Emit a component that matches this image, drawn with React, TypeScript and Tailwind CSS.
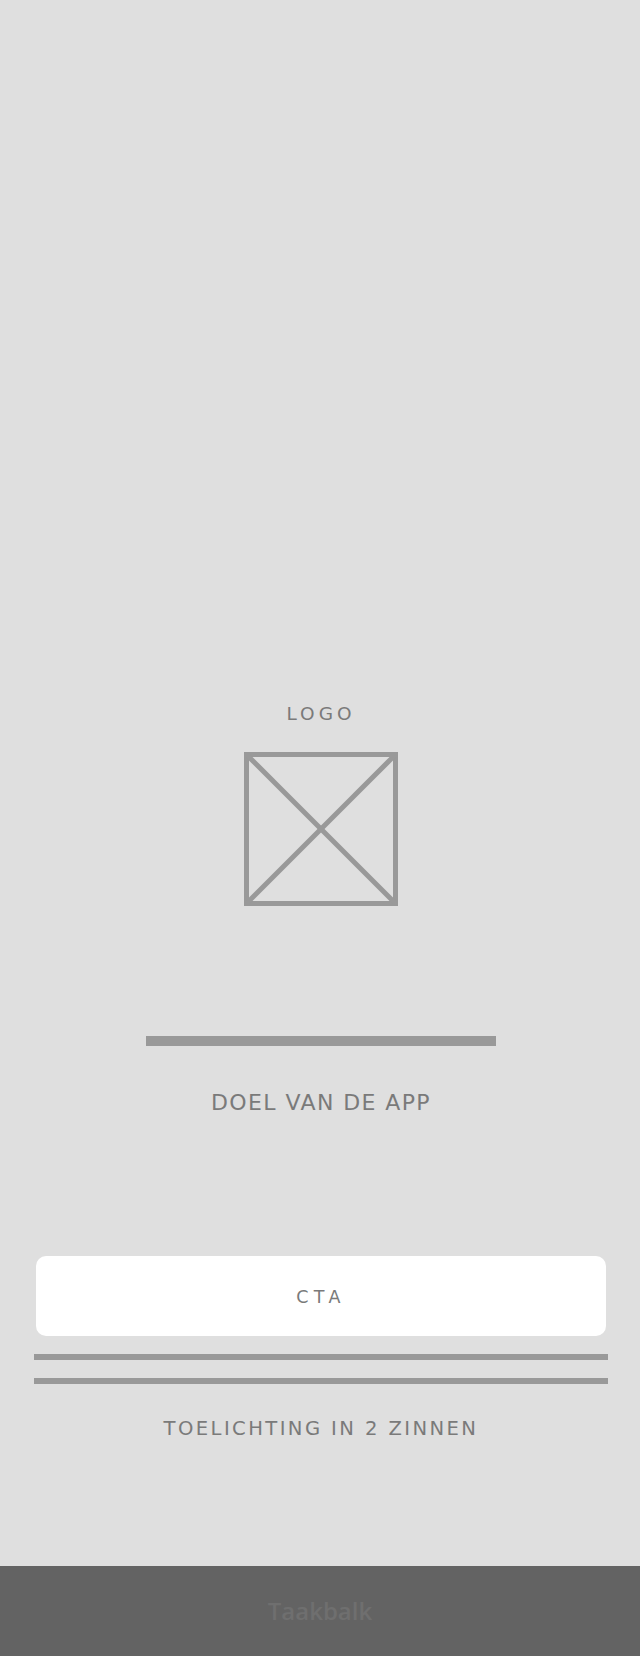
import React from "react";

export default function App() {
  const txt = "font-['DejaVu_Sans',sans-serif] font-normal text-[#7a7a7a] leading-none";
  return (
    <div className="min-h-[1656px] flex flex-col bg-[#dfdfdf]">
      <main className="flex-1 flex flex-col items-center pl-[34px] pr-[32px] pt-[705px]">
        <div className={`${txt} text-[18.5px] tracking-[4px]`}>LOGO</div>
        <svg className="mt-[28.7px] block" width="154" height="154" viewBox="0 0 154 154">
          <rect x="2.5" y="2.5" width="149" height="149" fill="none" stroke="#999999" strokeWidth="5" />
          <line x1="4" y1="4" x2="150" y2="150" stroke="#999999" strokeWidth="5" />
          <line x1="150" y1="4" x2="4" y2="150" stroke="#999999" strokeWidth="5" />
        </svg>
        <div className="mt-[130px] h-[10px] w-[350px] bg-[#999999]" />
        <div className={`${txt} mt-[45.4px] text-[22px] tracking-[1.4px]`}>DOEL VAN DE APP</div>
        <button className="mt-[142.6px] h-[80px] w-[570px] rounded-[10px] bg-white flex items-center justify-center">
          <span className={`${txt} mt-[4px] text-[17.5px] tracking-[5.3px]`}>CTA</span>
        </button>
        <div className="mt-[18px] h-[6px] w-full bg-[#999999]" />
        <div className="mt-[18px] h-[6px] w-full bg-[#999999]" />
        <div className={`${txt} mt-[34.7px] text-[19.6px] tracking-[2.4px]`}>TOELICHTING IN 2 ZINNEN</div>
      </main>
      <footer className="h-[90px] bg-[#636363] flex items-center justify-center">
        <span className="font-['Open_Sans',sans-serif] font-semibold text-[24px] text-[#6f6f6f] leading-none">Taakbalk</span>
      </footer>
    </div>
  );
}
